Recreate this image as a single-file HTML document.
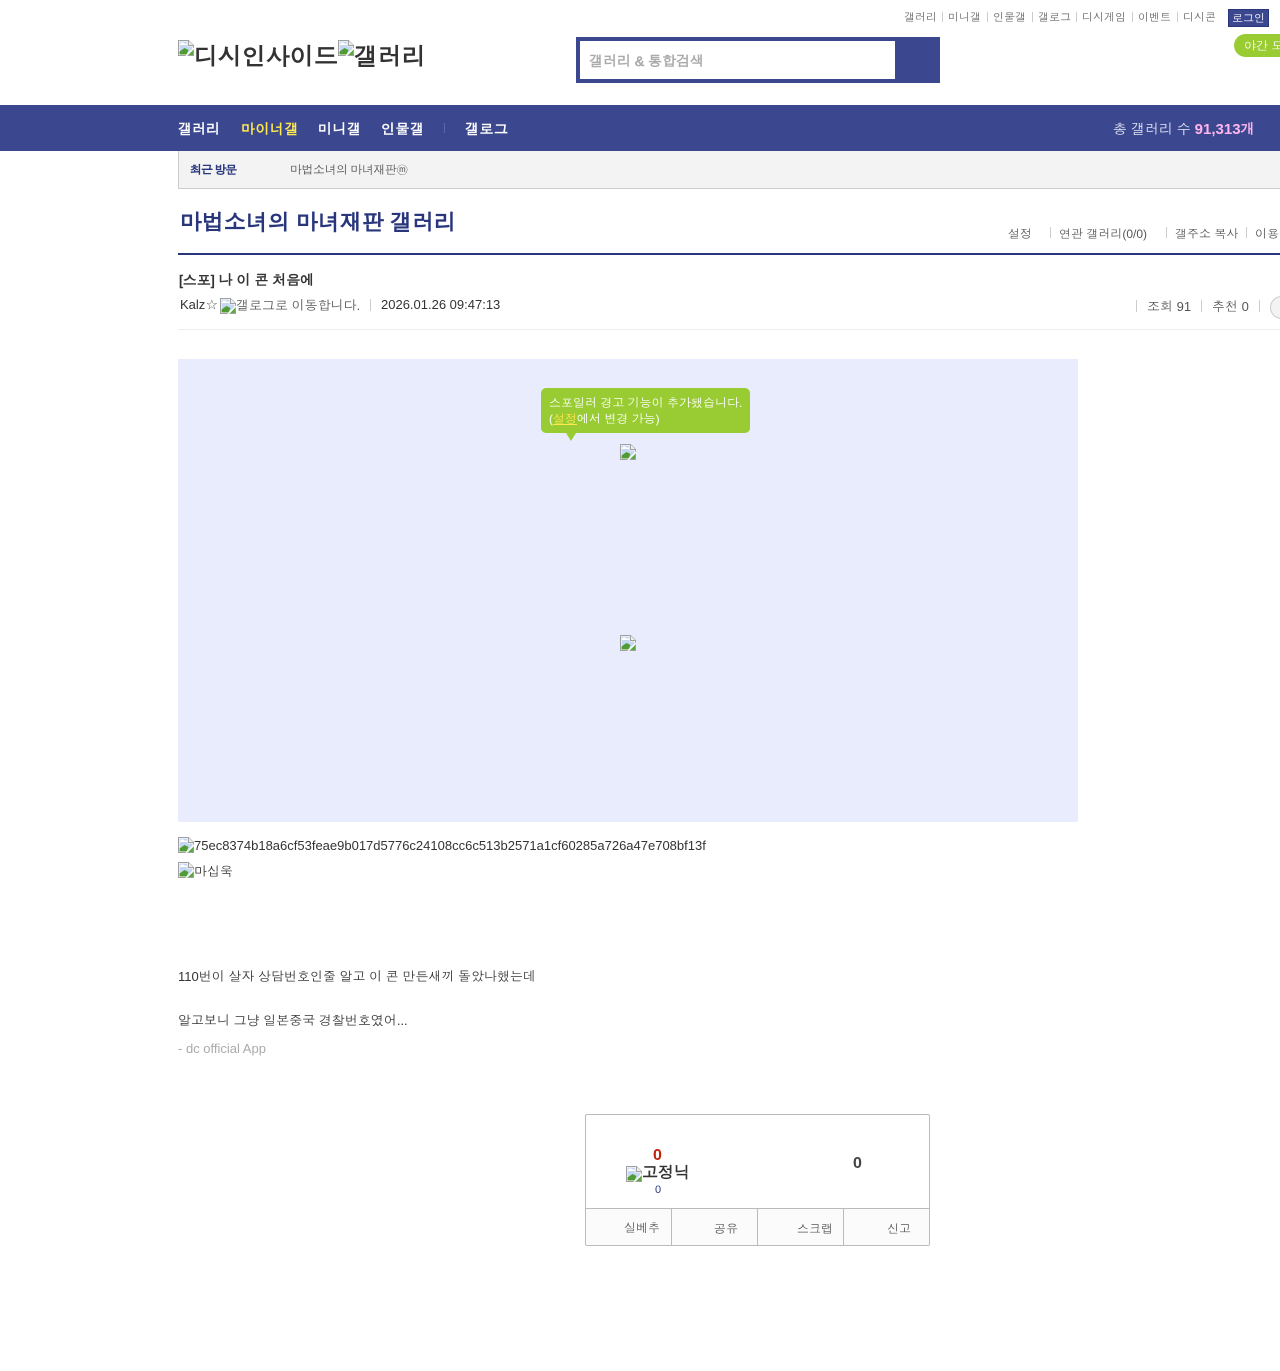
<!DOCTYPE html>
<html lang="ko"><head><meta charset="utf-8"><title>마법소녀의 마녀재판 갤러리</title>
<style>
html,body{margin:0;padding:0;background:#fff}
body{width:1280px;height:1371px;position:relative;overflow:hidden;font-family:"Liberation Sans",Dotum,sans-serif;color:#333}
.a{position:absolute;white-space:nowrap}
.b{position:absolute}
svg.bi{position:absolute;width:16px;height:16px;display:block}
.sep{position:absolute;width:1px;background:#ccc}
.s1{-webkit-text-stroke:.6px currentColor}
.s2{-webkit-text-stroke:1px currentColor}
</style></head><body>
<svg width="0" height="0" style="position:absolute"><defs><symbol id="bi" viewBox="0 0 16 16"><path d="M.5.5h10l5 5v10H.5z" fill="#fff" stroke="#a0a0a0"/><path d="M10.500.5v5h5" fill="#f0f0f0" stroke="#a0a0a0"/><path d="M1.500 1.500h8v5h5v3l-5 5h-8z" fill="#c6d7f2"/><path d="M2 4c1-2 3-2 4-1s2 1 3 0v2H2z" fill="#fff"/><path d="M1.500 14.500v-3l5-3.500 4 2-2 4.500z" fill="#4f9c35"/><path d="M10 15l5-5v5z" fill="#5aa83e"/><path d="M8 16L16 8" stroke="#fff" stroke-width="1.400"/></symbol></defs></svg>

<div class="a" style="left:904px;top:11px;font-size:11px;line-height:14px;color:#666">갤러리</div><i class="sep" style="left:942px;top:12px;height:10px"></i>
<div class="a" style="left:948px;top:11px;font-size:11px;line-height:14px;color:#666">미니갤</div><i class="sep" style="left:987px;top:12px;height:10px"></i>
<div class="a" style="left:993px;top:11px;font-size:11px;line-height:14px;color:#666">인물갤</div><i class="sep" style="left:1032px;top:12px;height:10px"></i>
<div class="a" style="left:1038px;top:11px;font-size:11px;line-height:14px;color:#666">갤로그</div><i class="sep" style="left:1076px;top:12px;height:10px"></i>
<div class="a" style="left:1082px;top:11px;font-size:11px;line-height:14px;color:#666">디시게임</div><i class="sep" style="left:1132px;top:12px;height:10px"></i>
<div class="a" style="left:1138px;top:11px;font-size:11px;line-height:14px;color:#666">이벤트</div><i class="sep" style="left:1177px;top:12px;height:10px"></i>
<div class="a" style="left:1183px;top:11px;font-size:11px;line-height:14px;color:#666">디시콘</div>
<div class="a" style="left:1228px;top:9px;width:39px;height:16px;border:1px solid #29367c;background:#3b4890;color:#fff;font-size:11px;line-height:19px;text-align:center">로그인</div>
<div class="a" style="left:1234px;top:34px;width:60px;height:23px;border-radius:12px;background:#99cc33;color:#fff;font-size:12px;line-height:25px;padding-left:10px">야간 모드</div>

<svg class="bi" style="left:178px;top:40px"><use href="#bi"/></svg>
<div class="a s2" style="left:194px;top:43px;font-size:24px;line-height:30px;color:#333">디시인사이드</div>
<svg class="bi" style="left:338px;top:40px"><use href="#bi"/></svg>
<div class="a s2" style="left:354px;top:43px;font-size:24px;line-height:30px;color:#333">갤러리</div>

<div class="b" style="left:576px;top:37px;width:364px;height:46px;background:#3b4890"></div>
<div class="b" style="left:580px;top:41px;width:315px;height:38px;background:#fff"></div>
<div class="a s1" style="left:589px;top:51px;font-size:14px;line-height:20px;color:#aaa">갤러리 &amp; 통합검색</div>

<div class="b" style="left:0;top:105px;width:1280px;height:46px;background:#3b4890"></div>
<div class="a s1" style="left:178px;top:119px;font-size:14px;line-height:20px;color:#fff">갤러리</div>
<div class="a s1" style="left:241px;top:119px;font-size:14px;line-height:20px;letter-spacing:.5px;color:#ffe94f">마이너갤</div>
<div class="a s1" style="left:318px;top:119px;font-size:14px;line-height:20px;letter-spacing:.5px;color:#fff">미니갤</div>
<div class="a s1" style="left:381px;top:119px;font-size:14px;line-height:20px;letter-spacing:.5px;color:#fff">인물갤</div>
<i class="sep" style="left:444px;top:123px;height:10px;background:#5c68a8"></i>
<div class="a s1" style="left:465px;top:119px;font-size:14px;line-height:20px;letter-spacing:.5px;color:#fff">갤로그</div>
<div class="a" style="left:1113px;top:119px;font-size:14px;line-height:20px;color:#e4e6f2">총 갤러리 수 <b style="color:#ffb5ec;font-size:15px;font-weight:700">91,313</b><span class="s1" style="color:#ffb5ec">개</span></div>

<div class="b" style="left:178px;top:151px;width:1102px;height:37px;background:#f3f3f3;border-left:1px solid #ccc;border-bottom:1px solid #ccc"></div>
<div class="a s1" style="left:190px;top:162px;font-size:12px;line-height:16px;letter-spacing:-1px;color:#29367c">최근 방문</div>
<div class="a" style="left:290px;top:162px;font-size:12px;line-height:16px;letter-spacing:-.5px;color:#555">마법소녀의 마녀재판ⓜ</div>

<div class="a s2" style="left:180px;top:208px;font-size:22px;line-height:30px;color:#29367c">마법소녀의 마녀재판 갤러리</div>
<div class="a" style="left:1008px;top:226px;font-size:12px;line-height:16px;color:#555">설정</div><i class="sep" style="left:1050px;top:227px;height:11px"></i>
<div class="a" style="left:1059px;top:226px;font-size:12px;line-height:16px;color:#555">연관 갤러리(0/0)</div><i class="sep" style="left:1166px;top:227px;height:11px"></i>
<div class="a" style="left:1175px;top:226px;font-size:12px;line-height:16px;color:#555">갤주소 복사</div><i class="sep" style="left:1246px;top:227px;height:11px"></i>
<div class="a" style="left:1255px;top:226px;font-size:12px;line-height:16px;color:#555">이용</div>
<div class="b" style="left:178px;top:253px;width:1102px;height:2px;background:#29367c"></div>

<div class="a s1" style="left:179px;top:270px;font-size:14px;line-height:20px;color:#333">[스포] 나 이 콘 처음에</div>
<div class="a" style="left:180px;top:296px;font-size:13px;line-height:18px;color:#333">Kalz☆</div>
<svg class="bi" style="left:220px;top:298px"><use href="#bi"/></svg>
<div class="a" style="left:236px;top:297px;font-size:13px;line-height:18px;color:#555">갤로그로 이동합니다.</div>
<i class="sep" style="left:370px;top:299px;height:12px"></i>
<div class="a" style="left:381px;top:296px;font-size:13px;line-height:18px;color:#333">2026.01.26 09:47:13</div>
<i class="sep" style="left:1136px;top:300px;height:12px"></i>
<div class="a" style="left:1147px;top:298px;font-size:13px;line-height:18px;color:#555">조회 91</div>
<i class="sep" style="left:1201px;top:300px;height:12px"></i>
<div class="a" style="left:1212px;top:298px;font-size:13px;line-height:18px;color:#555">추천 0</div>
<i class="sep" style="left:1259px;top:300px;height:12px"></i>
<div class="b" style="left:1270px;top:296px;width:30px;height:21px;border:1px solid #ccc;border-radius:12px;background:#f3f3f3"></div>
<div class="b" style="left:178px;top:329px;width:1102px;height:1px;background:#eee"></div>

<div class="b" style="left:178px;top:359px;width:900px;height:463px;background:#e8ecfc"></div>
<div class="b" style="left:541px;top:388px;width:209px;height:45px;background:#99cc33;border-radius:5px"></div>
<div class="b" style="left:566px;top:433px;width:0;height:0;border-left:5px solid transparent;border-right:5px solid transparent;border-top:8px solid #99cc33"></div>
<div class="a" style="left:549px;top:395px;font-size:12px;line-height:16px;color:#fff">스포일러 경고 기능이 추가됐습니다.<br>(<span style="color:#ffe94f;text-decoration:underline">설정</span>에서 변경 가능)</div>
<svg class="bi" style="left:620px;top:444px"><use href="#bi"/></svg>
<svg class="bi" style="left:620px;top:635px"><use href="#bi"/></svg>

<svg class="bi" style="left:178px;top:837px"><use href="#bi"/></svg>
<div class="a" style="left:194px;top:837px;font-size:13px;line-height:18px;color:#333">75ec8374b18a6cf53feae9b017d5776c24108cc6c513b2571a1cf60285a726a47e708bf13f</div>
<svg class="bi" style="left:178px;top:862px"><use href="#bi"/></svg>
<div class="a" style="left:194px;top:863px;font-size:13px;line-height:18px;color:#333">마십욱</div>

<div class="a" style="left:178px;top:968px;font-size:13px;line-height:18px;color:#333">110번이 살자 상담번호인줄 알고 이 콘 만든새끼 돌았나했는데</div>
<div class="a" style="left:178px;top:1012px;font-size:13px;line-height:18px;color:#333">알고보니 그냥 일본중국 경찰번호였어...</div>
<div class="a" style="left:178px;top:1040px;font-size:13px;line-height:18px;color:#aaa">- dc official App</div>

<div class="b" style="left:585px;top:1114px;width:343px;height:130px;border:1px solid #bbb;border-radius:2px"></div>
<div class="b" style="left:586px;top:1208px;width:343px;height:37px;background:#fbfbfb;border-top:1px solid #bbb;box-sizing:border-box"></div>
<i class="sep" style="left:671px;top:1209px;height:36px;background:#bbb"></i>
<i class="sep" style="left:757px;top:1209px;height:36px;background:#bbb"></i>
<i class="sep" style="left:843px;top:1209px;height:36px;background:#bbb"></i>
<div class="a" style="left:653px;top:1147px;font-size:16px;line-height:18px;font-weight:700;color:#c4210e">0</div>
<svg class="bi" style="left:626px;top:1166px"><use href="#bi"/></svg>
<div class="a s1" style="left:642px;top:1164px;font-size:16px;line-height:20px;color:#333">고정닉</div>
<div class="a" style="left:655px;top:1183px;font-size:11px;line-height:14px;color:#29367c">0</div>
<div class="a" style="left:853px;top:1155px;font-size:16px;line-height:18px;font-weight:700;color:#444">0</div>
<div class="a" style="left:624px;top:1220px;font-size:12px;line-height:16px;color:#555">실베추</div>
<div class="a" style="left:714px;top:1221px;font-size:12px;line-height:16px;color:#555">공유</div>
<div class="a" style="left:797px;top:1221px;font-size:12px;line-height:16px;color:#555">스크랩</div>
<div class="a" style="left:887px;top:1221px;font-size:12px;line-height:16px;color:#555">신고</div>
</body></html>
